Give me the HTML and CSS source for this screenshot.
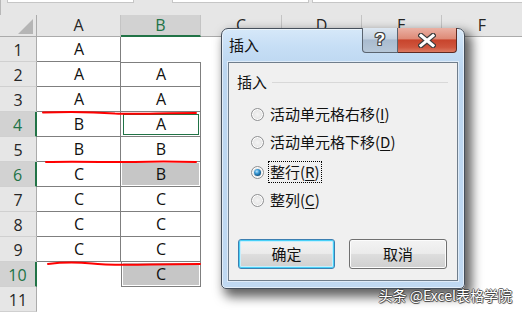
FILE: index.html
```html
<!DOCTYPE html>
<html>
<head>
<meta charset="utf-8">
<link rel="stylesheet" href="styles.css">
</head>
<body>
<div class="app">
  <div class="topbar">
    <div class="tbox tb1"></div>
    <div class="tbox tb2"></div>
    <div class="tbox tb3"></div>
  </div>
  <div class="sheet">
    <div class="corner"><span class="tri"></span></div>
    <div class="ch">A</div><div class="ch sel">B</div><div class="ch">C</div><div class="ch">D</div><div class="ch">E</div><div class="ch last">F</div>

    <div class="rh">1</div><div class="c bd">A</div><div class="c"></div><div class="c"></div><div class="c"></div><div class="c"></div><div class="c"></div>
    <div class="rh">2</div><div class="c bd">A</div><div class="c bd bt">A</div><div class="c"></div><div class="c"></div><div class="c"></div><div class="c"></div>
    <div class="rh">3</div><div class="c bd">A</div><div class="c bd">A</div><div class="c"></div><div class="c"></div><div class="c"></div><div class="c"></div>
    <div class="rh sel">4</div><div class="c bd">B</div><div class="c bd act">A</div><div class="c"></div><div class="c"></div><div class="c"></div><div class="c"></div>
    <div class="rh">5</div><div class="c bd">B</div><div class="c bd">B</div><div class="c"></div><div class="c"></div><div class="c"></div><div class="c"></div>
    <div class="rh sel">6</div><div class="c bd">C</div><div class="c bd hl">B</div><div class="c"></div><div class="c"></div><div class="c"></div><div class="c"></div>
    <div class="rh">7</div><div class="c bd">C</div><div class="c bd">C</div><div class="c"></div><div class="c"></div><div class="c"></div><div class="c"></div>
    <div class="rh">8</div><div class="c bd">C</div><div class="c bd">C</div><div class="c"></div><div class="c"></div><div class="c"></div><div class="c"></div>
    <div class="rh">9</div><div class="c bd">C</div><div class="c bd">C</div><div class="c"></div><div class="c"></div><div class="c"></div><div class="c"></div>
    <div class="rh sel">10</div><div class="c"></div><div class="c bd bl hl">C</div><div class="c"></div><div class="c"></div><div class="c"></div><div class="c"></div>
    <div class="rh">11</div><div class="c"></div><div class="c"></div><div class="c"></div><div class="c"></div><div class="c"></div><div class="c"></div>
  </div>

  <svg class="marks" width="522" height="312" viewBox="0 0 522 312">
    <path d="M43 112.5 C 70 111.5, 95 112, 115 113.5 C 135 114.5, 160 113, 196 113" />
    <path d="M46 162 C 80 161, 110 162.5, 135 162 C 160 161, 180 161.5, 196 162" />
    <path d="M48 264 C 60 262.5, 80 262.5, 92 263.5 C 100 264.5, 120 265, 150 264.5 L 200 264" />
  </svg>

  <div class="dialog">
    <div class="titlebar">
      <div class="title">插入</div>
      <div class="capbtns">
        <div class="cb help">?</div>
        <div class="cb close">
          <svg width="18" height="15" viewBox="0 0 18 15">
            <path class="xo" d="M3 2.5 L15 12.5 M15 2.5 L3 12.5"/>
            <path class="xi" d="M3 2.5 L15 12.5 M15 2.5 L3 12.5"/>
          </svg>
        </div>
      </div>
    </div>
    <div class="client">
      <div class="group">
        <span class="glabel">插入</span><span class="gline"></span>
      </div>
      <div class="radios">
        <div class="rrow"><span class="radio"></span><span class="rtext">活动单元格右移(<u>I</u>)</span></div>
        <div class="rrow"><span class="radio"></span><span class="rtext">活动单元格下移(<u>D</u>)</span></div>
        <div class="rrow r3"><span class="radio on"></span><span class="rtext focus">整行(<u>R</u>)</span></div>
        <div class="rrow"><span class="radio"></span><span class="rtext">整列(<u>C</u>)</span></div>
      </div>
      <div class="buttons">
        <div class="btn def">确定</div>
        <div class="btn">取消</div>
      </div>
    </div>
  </div>

  <div class="wm">头条 @Excel表格学院</div>
</div>
</body>
</html>
```

FILE: styles.css
```css
* { box-sizing: border-box; }
html, body { margin: 0; padding: 0; }
body { width: 522px; height: 312px; overflow: hidden; background: #fff; }

.app {
  position: relative;
  width: 522px;
  height: 312px;
  overflow: hidden;
  font-family: "Open Sans", "Noto Sans", sans-serif;
}

/* top strip */
.topbar {
  height: 15px;
  background: #e6e6e6;
  display: flex;
  align-items: flex-start;
  border-left: 1px solid #b8b8b8;
}
.tbox {
  height: 3px;
  background: #fff;
  border: 1px solid #c6c6c6;
  border-top: none;
}
.tb1 { margin-left: 6px; width: 127px; }
.tb2 { margin-left: 38px; width: 137px; }
.tb3 { margin-left: 3px; flex: 1; border-right: none; }

/* sheet grid */
.sheet {
  display: grid;
  grid-template-columns: 37px 84px 80px 81px 80px 80px 80px;
  grid-template-rows: 22px repeat(11, 25px);
}
.corner {
  background: #e6e6e6;
  border-right: 1px solid #ababab;
  border-bottom: 1px solid #ababab;
  position: relative;
}
.tri {
  position: absolute;
  right: 3px;
  bottom: 2px;
  width: 0;
  height: 0;
  border-left: 15px solid transparent;
  border-bottom: 15px solid #b5b5b5;
}
.ch {
  background: #e6e6e6;
  border-right: 1px solid #c4c4c4;
  border-bottom: 1px solid #ababab;
  color: #262626;
  font-size: 16px;
  line-height: 21px;
  text-align: center;
}
.ch.last { border-right: none; }
.ch.sel {
  background: #d2d2d2;
  color: #217346;
  border-bottom: 2px solid #217346;
  line-height: 20px;
}
.rh {
  background: #e6e6e6;
  border-right: 1px solid #ababab;
  border-bottom: 1px solid #d0d0d0;
  color: #262626;
  font-size: 16px;
  line-height: 26px;
  text-align: center;
}
.rh.sel {
  background: #d2d2d2;
  color: #217346;
  border-right: 2px solid #217346;
}
.c {
  font-size: 16px;
  line-height: 24px;
  text-align: center;
  color: #111;
  background: #fff;
}
.c.bd { box-shadow: inset -1px -1px 0 #7f7f7f; }
.c.bd.bt { box-shadow: inset -1px -1px 0 #7f7f7f, inset 0 1px 0 #7f7f7f; }
.c.hl {
  background: #c6c6c6;
  box-shadow: inset -1px -1px 0 #7f7f7f, inset -2px -2px 0 #fff, inset 1px 1px 0 #fff;
}
.c.bd.bl.hl {
  box-shadow: inset -1px -1px 0 #7f7f7f, inset 1px 0 0 #7f7f7f, inset -2px -2px 0 #fff, inset 2px 1px 0 #fff;
}
.c.act {
  outline: 1px solid #217346;
  outline-offset: -3px;
}

/* red hand-drawn marks */
.marks {
  position: absolute;
  left: 0;
  top: 0;
  pointer-events: none;
}
.marks path {
  fill: none;
  stroke: #ff0000;
  stroke-width: 2;
  stroke-linecap: round;
}

/* dialog */
.dialog {
  position: absolute;
  left: 221px;
  top: 28px;
  width: 244px;
  height: 261px;
  border: 1px solid #46505c;
  border-radius: 7px 7px 5px 5px;
  background: linear-gradient(180deg, #d6e8f9 0px, #c6def5 18px, #bcd6f0 40px, #c0d9f2 100%);
  box-shadow: inset 0 0 0 1px rgba(255,255,255,0.55), 5px 6px 11px 2px rgba(0,0,0,0.62);
  display: flex;
  flex-direction: column;
  font-family: "Noto Sans CJK SC", "Noto Sans", sans-serif;
  color: #000;
}
.titlebar {
  height: 33px;
  display: flex;
  align-items: flex-start;
}
.title {
  margin: 7px 0 0 7px;
  font-size: 15px;
  line-height: 18px;
  color: #111;
}
.capbtns {
  margin: -1px 7px 0 auto;
  display: flex;
  height: 25px;
}
.cb {
  height: 25px;
  border: 1px solid #5a6470;
  border-top: none;
}
.help {
  width: 36px;
  border-radius: 0 0 0 4px;
  background: linear-gradient(180deg, #dde7f1 0%, #c3d1e0 45%, #a9bbcf 50%, #b6c7d8 100%);
  color: #fff;
  font-family: "Liberation Sans", sans-serif;
  font-weight: bold;
  font-size: 17px;
  line-height: 24px;
  text-align: center;
  text-shadow: 1px 0 0 #444, -1px 0 0 #444, 0 1px 0 #444, 0 -1px 0 #444, 1px 1px 0 #444, -1px -1px 0 #444, 1px -1px 0 #444, -1px 1px 0 #444;
}
.close {
  width: 59px;
  border-left: none;
  border-color: #5e2a22;
  border-radius: 0 0 4px 0;
  background: linear-gradient(180deg, #eab1a4 0%, #de8a77 45%, #c8442c 50%, #cf553d 80%, #dc7a62 100%);
  display: flex;
  align-items: center;
  justify-content: center;
}
.close svg { display: block; }
.xo { stroke: #3c3c3c; stroke-width: 5.5; stroke-linecap: square; fill: none; }
.xi { stroke: #fff; stroke-width: 3; stroke-linecap: square; fill: none; }

.client {
  flex: 1;
  margin: 0 6px 7px 6px;
  background: #f0f0f0;
  border: 1px solid #707e8c;
  box-shadow: 0 0 0 1px rgba(255,255,255,0.5);
  padding: 9px 9px 0 8px;
  display: flex;
  flex-direction: column;
}
.group {
  display: flex;
  align-items: center;
  height: 20px;
}
.glabel {
  font-size: 15px;
  line-height: 20px;
  color: #111;
}
.gline {
  flex: 1;
  height: 1px;
  background: #d8d8d8;
  margin-left: 5px;
}
.radios {
  margin-top: 8px;
  padding-left: 14px;
  display: flex;
  flex-direction: column;
}
.rrow {
  height: 28px;
  display: flex;
  align-items: center;
}
.rrow.r3 { margin-top: 2px; }
.radio {
  width: 13px;
  height: 13px;
  border-radius: 50%;
  border: 1px solid #8f9092;
  background: radial-gradient(circle at 50% 50%, #f4f4f4 0%, #e6e6e6 55%, #d0d0d0 100%);
  box-shadow: inset 0 0 0 1px #fff;
  position: relative;
  flex: none;
}
.radio.on::after {
  content: "";
  position: absolute;
  left: 2px;
  top: 2px;
  width: 7px;
  height: 7px;
  border-radius: 50%;
  background: radial-gradient(circle at 40% 35%, #bfe6fb 0%, #3a9ad6 35%, #0d4f7e 75%, #083a5e 100%);
}
.rtext {
  margin-left: 4px;
  padding: 0 1px;
  font-size: 15px;
  line-height: 20px;
  color: #111;
  border: 1px solid transparent;
}
.rtext.focus { border: 1px dotted #000; }
.rtext u { text-decoration-thickness: 1px; text-underline-offset: 2px; }

.buttons {
  margin-top: 25px;
  padding-left: 1px;
  display: flex;
  gap: 14px;
}
.btn {
  width: 98px;
  height: 30px;
  border: 1px solid #707070;
  border-radius: 3px;
  background: linear-gradient(180deg, #f3f3f3 0%, #ebebeb 48%, #dddddd 52%, #cfcfcf 100%);
  box-shadow: inset 0 0 0 1px #fcfcfc;
  font-size: 15px;
  line-height: 28px;
  text-align: center;
  color: #111;
}
.btn.def {
  width: 97px;
  border-color: #3c7fb1;
  box-shadow: inset 0 0 0 1px #48d0f7, inset 0 0 0 2px #c8eefc;
}

/* watermark */
.wm {
  position: absolute;
  right: 10px;
  top: 286px;
  font-family: "Noto Sans CJK SC", "Noto Sans", sans-serif;
  font-size: 14px;
  line-height: 18px;
  color: #fff;
  text-shadow: 1px 0 0 rgba(60,60,60,0.75), -1px 0 0 rgba(60,60,60,0.75), 0 1px 0 rgba(60,60,60,0.75), 0 -1px 0 rgba(60,60,60,0.75), 1px 1px 1px rgba(0,0,0,0.4);
  white-space: nowrap;
}
```
